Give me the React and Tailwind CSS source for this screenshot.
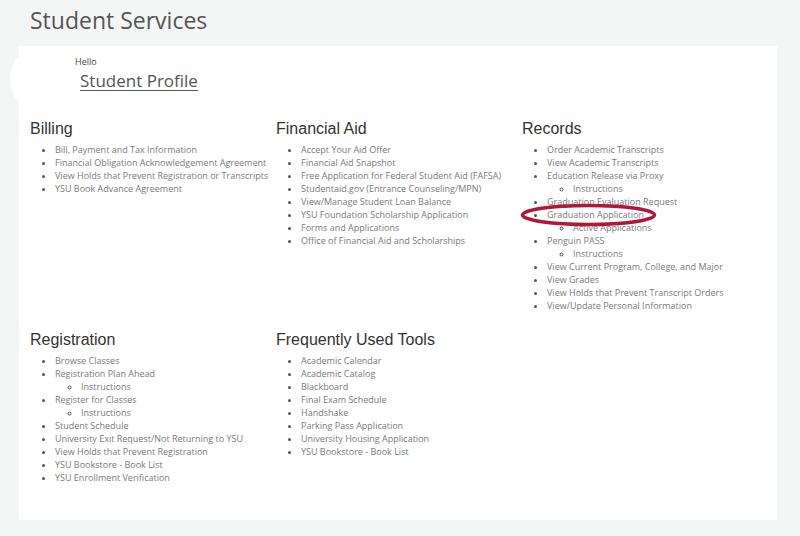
import React from "react";

const sections = [
  {
    title: "Billing",
    items: [
      { label: "Bill, Payment and Tax Information" },
      { label: "Financial Obligation Acknowledgement Agreement" },
      { label: "View Holds that Prevent Registration or Transcripts" },
      { label: "YSU Book Advance Agreement" },
    ],
  },
  {
    title: "Financial Aid",
    items: [
      { label: "Accept Your Aid Offer" },
      { label: "Financial Aid Snapshot" },
      { label: "Free Application for Federal Student Aid (FAFSA)" },
      { label: "Studentaid.gov (Entrance Counseling/MPN)" },
      { label: "View/Manage Student Loan Balance" },
      { label: "YSU Foundation Scholarship Application" },
      { label: "Forms and Applications" },
      { label: "Office of Financial Aid and Scholarships" },
    ],
  },
  {
    title: "Records",
    items: [
      { label: "Order Academic Transcripts" },
      { label: "View Academic Transcripts" },
      { label: "Education Release via Proxy", sub: ["Instructions"] },
      { label: "Graduation Evaluation Request" },
      { label: "Graduation Application", sub: ["Active Applications"], circled: true },
      { label: "Penguin PASS", sub: ["Instructions"] },
      { label: "View Current Program, College, and Major" },
      { label: "View Grades" },
      { label: "View Holds that Prevent Transcript Orders" },
      { label: "View/Update Personal Information" },
    ],
  },
  {
    title: "Registration",
    items: [
      { label: "Browse Classes" },
      { label: "Registration Plan Ahead", sub: ["Instructions"] },
      { label: "Register for Classes", sub: ["Instructions"] },
      { label: "Student Schedule" },
      { label: "University Exit Request/Not Returning to YSU" },
      { label: "View Holds that Prevent Registration" },
      { label: "YSU Bookstore - Book List" },
      { label: "YSU Enrollment Verification" },
    ],
  },
  {
    title: "Frequently Used Tools",
    items: [
      { label: "Academic Calendar" },
      { label: "Academic Catalog" },
      { label: "Blackboard" },
      { label: "Final Exam Schedule" },
      { label: "Handshake" },
      { label: "Parking Pass Application" },
      { label: "University Housing Application" },
      { label: "YSU Bookstore - Book List" },
    ],
  },
];

const Section = ({ title, items }) => (
  <div className="flex flex-col">
    <h3 className="pt-[1px] text-[16px] leading-[20px] text-[#333] font-['Liberation_Sans',Arial,sans-serif]">
      {title}
    </h3>
    <ul className="mt-[4px] pl-[25px] list-disc marker:text-[#555] text-[9px] leading-[13px] text-[#7a7a7a] font-['Open_Sans',sans-serif]">
      {items.map((item) => (
        <li key={item.label} className={item.circled ? "relative" : ""}>
          <span>{item.label}</span>
          {item.circled && (
            <svg
              className="absolute left-[-27px] top-[-5px] w-[137px] h-[24px] pointer-events-none"
              viewBox="0 0 137 24"
            >
              <ellipse cx="68.5" cy="12" rx="66" ry="9.5" fill="none" stroke="#b0173a" strokeWidth="3.5" />
            </svg>
          )}
          {item.sub && (
            <ul className="pl-[26px] list-[circle]">
              {item.sub.map((s) => (
                <li key={s}>{s}</li>
              ))}
            </ul>
          )}
        </li>
      ))}
    </ul>
  </div>
);

const App = () => {
  return (
    <div className="w-[800px] h-[536px] bg-[#f4f5f5] overflow-hidden font-['Open_Sans',sans-serif]">
      <h1 className="pl-[30px] pt-[4px] h-[46px] text-[23px] leading-[32px] text-[#555]">
        Student Services
      </h1>
      <div className="relative ml-[19px] w-[758px] h-[474px] bg-white">
        <div className="absolute left-[-9px] top-[0px] w-[64px] h-[66px] rounded-full bg-white" />
        <div className="relative pl-[56px] pt-[10px] h-[72px]">
          <div className="text-[9px] leading-[12px] text-[#444]">Hello</div>
          <a className="block ml-[5px] mt-[2px] text-[17px] leading-[22px] text-[#555] underline underline-offset-[3px]">
            Student Profile
          </a>
        </div>
        <div className="grid grid-cols-[246px_246px_246px] pl-[11px]">
          {sections.slice(0, 3).map((s) => (
            <Section key={s.title} {...s} />
          ))}
        </div>
        <div className="grid grid-cols-[246px_246px_246px] pl-[11px] mt-[17px]">
          {sections.slice(3).map((s) => (
            <Section key={s.title} {...s} />
          ))}
        </div>
      </div>
    </div>
  );
};

export default App;
